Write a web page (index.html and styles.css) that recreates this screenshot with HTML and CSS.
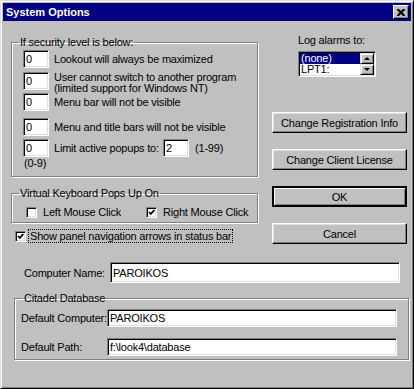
FILE: index.html
```html
<!DOCTYPE html>
<html lang="en">
<head>
    <meta charset="UTF-8">
    <meta name="viewport" content="width=device-width, initial-scale=1.0">
    <title>System Options</title>
    <link rel="stylesheet" href="styles.css">
</head>
<body>
    <div class="window">
        <div class="titlebar">
            <span class="title">System Options</span>
            <button class="close" type="button" aria-label="Close">
                <svg width="8" height="7" viewBox="0 0 8 7">
                    <path d="M0 0h2l2 2 2-2h2v1l-2.5 2.5L8 6v1H6L4 5 2 7H0V6l2.5-2.5L0 1z" fill="#000"/>
                </svg>
            </button>
        </div>

        <div class="content">
            <div class="top">
                <div class="left">
                    <fieldset class="group security">
                        <legend>If security level is below:</legend>
                        <div class="row">
                            <input class="field level" type="text" value="0">
                            <span class="label">Lookout will always be maximized</span>
                        </div>
                        <div class="row row-2">
                            <input class="field level" type="text" value="0">
                            <span class="label two-line">User cannot switch to another program<br>(limited support for Windows NT)</span>
                        </div>
                        <div class="row row-3">
                            <input class="field level" type="text" value="0">
                            <span class="label">Menu bar will not be visible</span>
                        </div>
                        <div class="row row-4">
                            <input class="field level" type="text" value="0">
                            <span class="label">Menu and title bars will not be visible</span>
                        </div>
                        <div class="row row-5">
                            <input class="field level" type="text" value="0">
                            <span class="label popup-label">Limit active popups to:</span>
                            <input class="field popups" type="text" value="2">
                            <span class="range">(1-99)</span>
                        </div>
                        <div class="hint">(0-9)</div>
                    </fieldset>

                    <fieldset class="group keyboard">
                        <legend>Virtual Keyboard Pops Up On</legend>
                        <div class="check-row">
                            <label class="check first">
                                <span class="box"></span>
                                <span>Left Mouse Click</span>
                            </label>
                            <label class="check">
                                <span class="box checked"></span>
                                <span>Right Mouse Click</span>
                            </label>
                        </div>
                    </fieldset>

                    <label class="check nav-arrows">
                        <span class="box checked"></span>
                        <span class="focus">Show panel navigation arrows in status bar</span>
                    </label>
                </div>

                <div class="right">
                    <div class="log-label">Log alarms to:</div>
                    <div class="listbox">
                        <div class="items">
                            <div class="item selected">(none)</div>
                            <div class="item">LPT1:</div>
                        </div>
                        <div class="scrollbar">
                            <div class="arrow up"></div>
                            <div class="arrow down"></div>
                        </div>
                    </div>

                    <div class="buttons">
                        <button class="btn" type="button">Change Registration Info</button>
                        <button class="btn" type="button">Change Client License</button>
                        <button class="btn default" type="button">OK</button>
                        <button class="btn" type="button">Cancel</button>
                    </div>
                </div>
            </div>

            <div class="name-row">
                <span class="name-label">Computer Name:</span>
                <input class="field wide tall" type="text" value="PAROIKOS">
            </div>

            <fieldset class="group citadel">
                <legend>Citadel Database</legend>
                <div class="db-row">
                    <span class="db-label">Default Computer:</span>
                    <input class="field wide" type="text" value="PAROIKOS">
                </div>
                <div class="db-row">
                    <span class="db-label">Default Path:</span>
                    <input class="field wide" type="text" value="f:\look4\database">
                </div>
            </fieldset>
        </div>
    </div>
</body>
</html>
```

FILE: styles.css
```css
body {
    margin: 0;
    background: #c0c0c0;
    font-family: "Liberation Sans", Arial, sans-serif;
    font-size: 11px;
    letter-spacing: -0.2px;
    color: #000;
    white-space: nowrap;
}
.window {
    box-sizing: border-box;
    width: 414px;
    height: 389px;
    padding: 2px;
    background: #c0c0c0;
    border: 1px solid;
    border-color: #dfdfdf #000 #000 #dfdfdf;
    box-shadow: inset 1px 1px #fff, inset -1px -1px #808080;
}
.titlebar {
    display: flex;
    align-items: center;
    justify-content: space-between;
    height: 18px;
    padding: 0 2px 0 3px;
    background: #000080;
    color: #fff;
}
.title {
    font-weight: bold;
    font-size: 11px;
    letter-spacing: 0;
}
.close {
    display: flex;
    align-items: center;
    justify-content: center;
    width: 16px;
    height: 14px;
    padding: 0;
    background: #c0c0c0;
    border: 1px solid;
    border-color: #fff #000 #000 #fff;
    box-shadow: inset -1px -1px #808080;
}

/* shared win95 bits */
.field {
    box-sizing: border-box;
    height: 18px;
    margin: 0;
    padding: 0 2px;
    font: inherit;
    letter-spacing: inherit;
    color: #000;
    background: #fff;
    border: 1px solid;
    border-color: #808080 #fff #fff #808080;
    box-shadow: inset 1px 1px #000, inset -1px -1px #dfdfdf;
    outline: none;
}
.group {
    margin: 0;
    border: 1px solid #808080;
    box-shadow: inset 1px 1px #fff, 1px 1px #fff;
}
.group legend {
    padding: 0 1px;
    line-height: 14px;
}
.btn {
    box-sizing: border-box;
    width: 135px;
    height: 21px;
    padding: 0;
    font: inherit;
    letter-spacing: inherit;
    color: #000;
    background: #c0c0c0;
    border: 1px solid;
    border-color: #fff #000 #000 #fff;
    box-shadow: inset -1px -1px #808080, inset 1px 1px #dfdfdf;
}
.btn.default {
    border: 2px solid #000;
    box-shadow: inset 1px 1px #fff, inset -1px -1px #808080;
}

.content {
    padding: 12px 0 0 8px;
}
.top {
    display: flex;
}

/* left column */
.left {
    width: 247px;
    margin-top: 2px;
}
.security {
    padding: 1px 6px 7px 11px;
}
.security legend {
    margin-left: -4px;
}
.row {
    display: flex;
    align-items: center;
    height: 18px;
    margin-top: 3px;
}
.security .row:first-of-type {
    margin-top: 0;
}
.row-2 {
    margin-top: 4px;
}
.row-4 {
    margin-top: 7px;
}
.level {
    width: 26px;
    flex: none;
}
.label {
    margin-left: 5px;
    line-height: 14px;
}
.two-line {
    line-height: 11px;
    margin-top: 3px;
}
.popup-label {
    width: 109px;
}
.popups {
    width: 26px;
}
.range {
    margin-left: 6px;
}
.hint {
    line-height: 12px;
    margin-left: 1px;
}

.keyboard {
    margin-top: 9px;
    padding: 5px 6px 3px 14px;
}
.keyboard legend {
    margin-left: -7px;
}
.check-row {
    display: flex;
}
.check {
    display: flex;
    align-items: center;
    height: 14px;
}
.check.first {
    width: 120px;
}
.box {
    box-sizing: border-box;
    flex: none;
    width: 11px;
    height: 11px;
    margin-right: 6px;
    background: #fff;
    border: 1px solid;
    border-color: #808080 #fff #fff #808080;
    box-shadow: inset 1px 1px #000, inset -1px -1px #dfdfdf;
}
.box.checked {
    background: #fff url("data:image/svg+xml,%3Csvg xmlns='http://www.w3.org/2000/svg' width='9' height='9'%3E%3Cpath d='M2 4l1.8 2 3.5-4' stroke='%23000' stroke-width='1.8' fill='none'/%3E%3C/svg%3E") no-repeat center;
}
.nav-arrows {
    margin: 6px 0 0 4px;
}
.nav-arrows .box {
    margin-right: 3px;
}
.focus {
    padding: 0 1px;
    outline: 1px dotted #000;
    line-height: 12px;
}

/* right column */
.right {
    margin-left: 14px;
}
.log-label {
    margin-left: 26px;
    line-height: 14px;
}
.listbox {
    box-sizing: border-box;
    display: flex;
    width: 78px;
    height: 26px;
    margin: 4px 0 0 26px;
    padding: 1px;
    background: #fff;
    border: 1px solid;
    border-color: #808080 #fff #fff #808080;
    box-shadow: inset 1px 1px #000, inset -1px -1px #dfdfdf;
}
.items {
    flex: 1;
}
.item {
    height: 11px;
    line-height: 11px;
    padding-left: 1px;
}
.item.selected {
    background: #000080;
    color: #fff;
}
.scrollbar {
    display: flex;
    flex-direction: column;
    width: 14px;
    background: #c0c0c0;
}
.arrow {
    position: relative;
    box-sizing: border-box;
    flex: 1;
    background: #c0c0c0;
    border: 1px solid;
    border-color: #dfdfdf #000 #000 #dfdfdf;
    box-shadow: inset 1px 1px #fff, inset -1px -1px #808080;
}
.arrow::after {
    content: "";
    position: absolute;
    left: 3px;
    top: 3px;
    border-left: 3px solid transparent;
    border-right: 3px solid transparent;
}
.arrow.up::after {
    border-bottom: 3px solid #000;
}
.arrow.down::after {
    border-top: 3px solid #000;
}
.buttons {
    display: flex;
    flex-direction: column;
    gap: 16px;
    margin-top: 35px;
}

/* bottom */
.name-row {
    display: flex;
    align-items: center;
    margin: 18px 0 0 13px;
}
.name-label {
    width: 86px;
}
.wide {
    width: 290px;
}
.tall {
    height: 21px;
}
.citadel {
    width: 395px;
    box-sizing: border-box;
    margin: 8px 0 0 3px;
    padding: 1px 10px 3px 6px;
}
.citadel legend {
    margin-left: 2px;
}
.db-row {
    display: flex;
    align-items: center;
    margin-top: 11px;
}
.db-row:first-of-type {
    margin-top: 3px;
}
.db-label {
    width: 86px;
}
```
